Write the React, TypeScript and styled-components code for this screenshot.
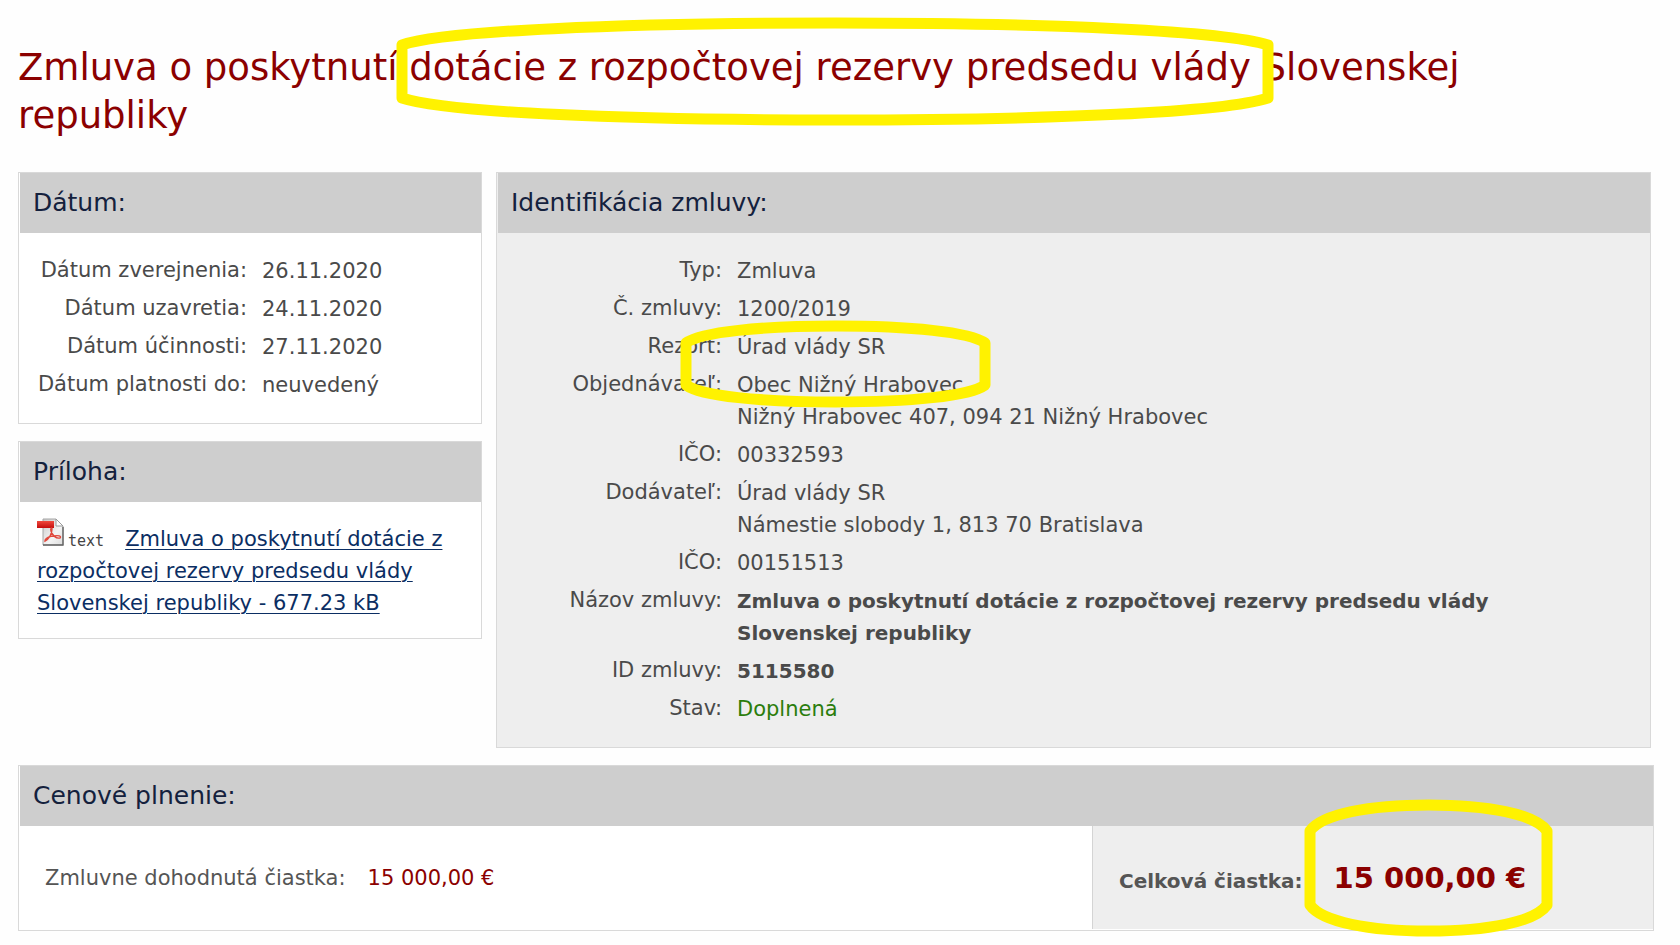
import React from "react";
import styled, { createGlobalStyle } from "styled-components";

const GlobalStyle = createGlobalStyle`
  *, *::before, *::after { box-sizing: border-box; }
  body {
    margin: 0;
    background: #fefefe;
    color: #4a4a4a;
    font-family: "DejaVu Sans", Verdana, sans-serif;
    font-size: 21px;
    line-height: 32px;
  }
`;

const Page = styled.main`
  padding: 44px 26px 14px 18px;
`;

const Title = styled.h1`
  margin: 0 0 32px;
  padding-right: 80px;
  color: #8b0000;
  font-size: 37px;
  font-weight: 400;
  line-height: 48px;
`;

const Columns = styled.div`
  display: grid;
  grid-template-columns: 464px 1fr;
  align-items: start;
  gap: 14px;
  margin: 0 3px 17px 0;
`;

const Sidebar = styled.div`
  display: grid;
  gap: 17px;
`;

const Panel = styled.section<{ $shaded?: boolean }>`
  border: 1px solid #d9d9d9;
  background: ${(p) => (p.$shaded ? "#eeeeee" : "#ffffff")};
`;

const PanelTitle = styled.h2`
  margin: 0 0 0 1px;
  padding: 14px 13px;
  background: #cecece;
  color: #14213d;
  font-size: 25px;
  font-weight: 400;
  line-height: 32px;
`;

const Details = styled.dl<{ $labelWidth: number }>`
  display: grid;
  grid-template-columns: ${(p) => p.$labelWidth}px 1fr;
  gap: 6px 15px;
  margin: 0;
  padding: 22px 16px 22px 12px;
`;

const Label = styled.dt`
  line-height: 30px;
  text-align: right;
`;

const Value = styled.dd<{ $bold?: boolean; $color?: string }>`
  margin: 0;
  font-size: ${(p) => (p.$bold ? 20 : 21)}px;
  font-weight: ${(p) => (p.$bold ? 700 : 400)};
  color: ${(p) => p.$color ?? "inherit"};
`;

const Attachment = styled.p`
  margin: 0;
  padding: 21px 18px 19px;

  svg {
    margin-top: -8px;
    vertical-align: baseline;
  }
`;

const FileLink = styled.a`
  color: #0b2e63;
  text-decoration: underline;
  text-decoration-thickness: 1px;
  text-underline-offset: 3px;
`;

const FileType = styled.span`
  margin: 0 21px 0 4px;
  color: #444444;
  font-family: "DejaVu Sans Mono", monospace;
  font-size: 15px;
  line-height: 16px;
`;

const PriceRow = styled.div`
  display: grid;
  grid-template-columns: 1fr 561px;
`;

const PriceCell = styled.dl<{ $total?: boolean }>`
  display: flex;
  align-items: baseline;
  gap: ${(p) => (p.$total ? 31 : 22)}px;
  margin: 0 0 1px;
  padding: 36px 26px 32px;
  border-left: ${(p) => (p.$total ? "1px solid #d4d4d4" : "0")};
  background: ${(p) => (p.$total ? "#eeeeee" : "#ffffff")};
  color: #555555;
  font-size: ${(p) => (p.$total ? 20 : 21)}px;
  font-weight: ${(p) => (p.$total ? 700 : 400)};
`;

const Amount = styled.dd<{ $large?: boolean }>`
  margin: 0;
  color: #8b0000;
  font-size: ${(p) => (p.$large ? 29 : 21)}px;
`;

const Marked = styled.span`
  position: relative;
`;

const Stroke = styled.svg<{ $left: number; $top: number }>`
  position: absolute;
  left: ${(p) => p.$left}px;
  top: ${(p) => p.$top}px;
  overflow: visible;
  pointer-events: none;
`;

type HighlightProps = {
  left: number;
  top: number;
  width: number;
  height: number;
  shoulder: number;
};

/* Marker outline: straight sides joined by shallow arcs above and below. */
function Highlight({ left, top, width: w, height: h, shoulder: s }: HighlightProps) {
  const m = w / 2;
  const a = w * 0.05;
  const b = w * 0.25;
  const k = s * 0.35;
  const d = [
    `M0 ${s}`,
    `C${a} ${k} ${b} 0 ${m} 0`,
    `C${w - b} 0 ${w - a} ${k} ${w} ${s}`,
    `V${h - s}`,
    `C${w - a} ${h - k} ${w - b} ${h} ${m} ${h}`,
    `C${b} ${h} ${a} ${h - k} 0 ${h - s}`,
    "Z",
  ].join(" ");
  return (
    <Stroke $left={left} $top={top} width={w} height={h} aria-hidden="true">
      <path d={d} fill="none" stroke="#fff200" strokeWidth="11" strokeLinejoin="round" />
    </Stroke>
  );
}

function PdfIcon() {
  return (
    <svg width="27" height="28" viewBox="0 0 27 28" aria-hidden="true">
      <defs>
        <linearGradient id="sheet" x1="0" y1="0" x2="1" y2="1">
          <stop offset="0" stopColor="#c9c9c9" />
          <stop offset="0.6" stopColor="#f4f4f4" />
          <stop offset="1" stopColor="#dcdcdc" />
        </linearGradient>
        <linearGradient id="band" x1="0" y1="0" x2="0" y2="1">
          <stop offset="0" stopColor="#f04a3e" />
          <stop offset="1" stopColor="#c40d0d" />
        </linearGradient>
      </defs>
      <path d="M6 1H19L26 8V27H6Z" fill="url(#sheet)" stroke="#a5a5a5" />
      <path d="M6 27H26V9" fill="none" stroke="#666666" strokeWidth="1.4" />
      <path d="M19 1V8H26Z" fill="#ffffff" stroke="#999999" />
      <rect x="0" y="3" width="17" height="7" fill="url(#band)" />
      <path
        d="M8 23C12 21 15 16 15 11C15 9 13 10 14 13C15 17 19 21 23 20C25 18 21 17 17 18C13 18 8 20 8 23Z"
        fill="none"
        stroke="#e0483c"
        strokeWidth="1.4"
      />
    </svg>
  );
}

const dates = [
  ["Dátum zverejnenia:", "26.11.2020"],
  ["Dátum uzavretia:", "24.11.2020"],
  ["Dátum účinnosti:", "27.11.2020"],
  ["Dátum platnosti do:", "neuvedený"],
];

export default function App() {
  return (
    <>
      <GlobalStyle />
      <Page>
        <Title>
          Zmluva o poskytnutí{" "}
          <Marked>
            dotácie z rozpočtovej rezervy predsedu vlády
            <Highlight left={-7} top={-23} width={866} height={97} shoulder={22} />
          </Marked>{" "}
          Slovenskej republiky
        </Title>

        <Columns>
          <Sidebar>
            <Panel>
              <PanelTitle>Dátum:</PanelTitle>
              <Details $labelWidth={216}>
                {dates.map(([label, value]) => (
                  <React.Fragment key={label}>
                    <Label>{label}</Label>
                    <Value>{value}</Value>
                  </React.Fragment>
                ))}
              </Details>
            </Panel>

            <Panel>
              <PanelTitle>Príloha:</PanelTitle>
              <Attachment>
                <PdfIcon />
                <FileType>text</FileType>
                <FileLink href="#priloha">
                  Zmluva o poskytnutí dotácie z rozpočtovej rezervy predsedu vlády Slovenskej
                  republiky - 677.23 kB
                </FileLink>
              </Attachment>
            </Panel>
          </Sidebar>

          <Panel $shaded>
            <PanelTitle>Identifikácia zmluvy:</PanelTitle>
            <Details $labelWidth={213}>
              <Label>Typ:</Label>
              <Value>Zmluva</Value>
              <Label>Č. zmluvy:</Label>
              <Value>1200/2019</Value>
              <Label>Rezort:</Label>
              <Value>
                <Marked>
                  Úrad vlády SR
                  <Highlight left={-51} top={-9} width={299} height={76} shoulder={17} />
                </Marked>
              </Value>
              <Label>Objednávateľ:</Label>
              <Value>
                Obec Nižný Hrabovec
                <br />
                Nižný Hrabovec 407, 094 21 Nižný Hrabovec
              </Value>
              <Label>IČO:</Label>
              <Value>00332593</Value>
              <Label>Dodávateľ:</Label>
              <Value>
                Úrad vlády SR
                <br />
                Námestie slobody 1, 813 70 Bratislava
              </Value>
              <Label>IČO:</Label>
              <Value>00151513</Value>
              <Label>Názov zmluvy:</Label>
              <Value $bold>
                Zmluva o poskytnutí dotácie z rozpočtovej rezervy predsedu vlády
                <br />
                Slovenskej republiky
              </Value>
              <Label>ID zmluvy:</Label>
              <Value $bold>5115580</Value>
              <Label>Stav:</Label>
              <Value $color="#2b7d0c">Doplnená</Value>
            </Details>
          </Panel>
        </Columns>

        <Panel>
          <PanelTitle>Cenové plnenie:</PanelTitle>
          <PriceRow>
            <PriceCell>
              <dt>Zmluvne dohodnutá čiastka:</dt>
              <Amount>15 000,00 €</Amount>
            </PriceCell>
            <PriceCell $total>
              <dt>Celková čiastka:</dt>
              <Amount $large>
                <Marked>
                  15 000,00 €
                  <Highlight left={-24} top={-56} width={237} height={126} shoulder={26} />
                </Marked>
              </Amount>
            </PriceCell>
          </PriceRow>
        </Panel>
      </Page>
    </>
  );
}
